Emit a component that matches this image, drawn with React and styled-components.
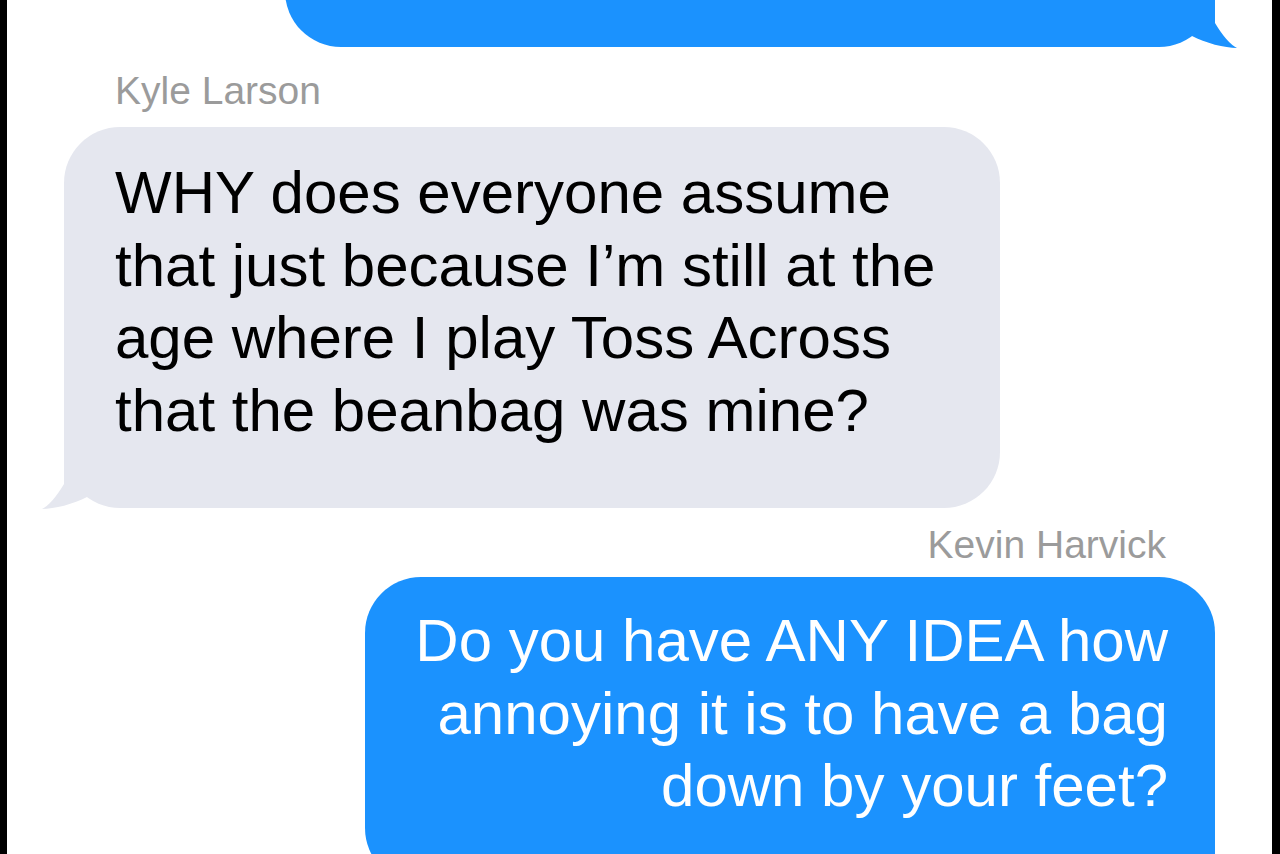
import React from "react";
import styled, { createGlobalStyle, css } from "styled-components";

const GlobalStyle = createGlobalStyle`
  html, body {
    margin: 0;
    padding: 0;
    height: 100%;
    overflow: hidden;
    background: #000;
  }
  body {
    font-family: "Liberation Sans", Arial, Helvetica, sans-serif;
  }
`;

const Thread = styled.main`
  box-sizing: border-box;
  margin: 0 8px 0 7px;
  min-height: 100vh;
  background: #fff;
  padding: 0 57px;
  display: flex;
  flex-direction: column;
`;

const Sender = styled.div`
  font-size: 39px;
  line-height: 39px;
  color: #9b9b9b;
  align-self: ${(p) => (p.$mine ? "flex-end" : "flex-start")};
  margin: ${(p) => (p.$mine ? "17px 49px 13px 0" : "24px 0 17px 51px")};
`;

const Bubble = styled.div`
  position: relative;
  box-sizing: border-box;
  width: ${(p) => p.$width}px;
  border-radius: 56px;
  font-size: 60px;
  line-height: 72.5px;
  white-space: nowrap;
  ${(p) =>
    p.$mine
      ? css`
          align-self: flex-end;
          background: #1b92fe;
          color: #fff;
          text-align: right;
          padding: 28px 47px 61px 40px;
        `
      : css`
          align-self: flex-start;
          background: #e5e7ef;
          color: #000;
          text-align: left;
          padding: 30px 40px 61px 51px;
        `}
`;

/* the previous message, scrolled mostly out of view above the top edge */
const EarlierBubble = styled(Bubble)`
  height: 160px;
  margin-top: -113px;
`;

const TailSvg = styled.svg`
  position: absolute;
  bottom: -5px;
  width: 60px;
  height: 70px;
  overflow: visible;
  ${(p) =>
    p.$mine
      ? css`
          right: -30px;
          fill: #1b92fe;
        `
      : css`
          left: -30px;
          transform: scaleX(-1);
          fill: #e5e7ef;
        `}
`;

function Tail({ mine }) {
  return (
    <TailSvg $mine={mine} viewBox="-30 -65 60 70" aria-hidden="true">
      <path d="M0 -56 L0 -24 Q12 -4 22 1 C10 1 -10 -4 -23 -11 L-23 -56 Z" />
    </TailSvg>
  );
}

function Message({ mine, width, lines = [], as: As = Bubble }) {
  return (
    <As $mine={mine} $width={width}>
      {lines.map((line, i) => (
        <React.Fragment key={i}>
          {i > 0 && <br />}
          {line}
        </React.Fragment>
      ))}
      <Tail mine={mine} />
    </As>
  );
}

export default function App() {
  return (
    <>
      <GlobalStyle />
      <Thread>
        <Message as={EarlierBubble} mine width={930} />
        <Sender>Kyle Larson</Sender>
        <Message
          width={936}
          lines={[
            "WHY does everyone assume",
            "that just because I’m still at the",
            "age where I play Toss Across",
            "that the beanbag was mine?",
          ]}
        />
        <Sender $mine>Kevin Harvick</Sender>
        <Message
          mine
          width={850}
          lines={[
            "Do you have ANY IDEA how",
            "annoying it is to have a bag",
            "down by your feet?",
          ]}
        />
      </Thread>
    </>
  );
}
